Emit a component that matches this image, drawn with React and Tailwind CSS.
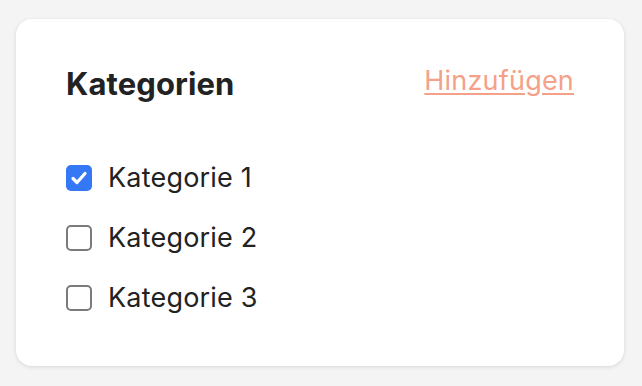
import { useState } from 'react';

const FONT = { fontFamily: 'Inter, "Noto Sans", sans-serif' };

function Check({ checked }) {
  if (checked) {
    return (
      <span className="flex h-[26px] w-[26px] items-center justify-center rounded-[5px] bg-[#3478f6]">
        <svg width="20" height="20" viewBox="0 0 20 20" fill="none">
          <path d="M4 10.5l4 4 8-9" stroke="#fff" strokeWidth="3.2" strokeLinecap="round" strokeLinejoin="round" />
        </svg>
      </span>
    );
  }
  return <span className="block h-[26px] w-[26px] rounded-[5px] border-2 border-[#7b7b7b] bg-white" />;
}

export default function App() {
  const [items, setItems] = useState([
    { name: 'Kategorie 1', checked: true },
    { name: 'Kategorie 2', checked: false },
    { name: 'Kategorie 3', checked: false },
  ]);

  const toggle = (i) =>
    setItems(items.map((it, j) => (j === i ? { ...it, checked: !it.checked } : it)));

  return (
    <div className="min-h-screen bg-[#f4f4f4] pl-4 pt-[19px]" style={FONT}>
      <div className="w-[608px] rounded-2xl bg-white px-[50px] pb-[38px] pt-[46px] shadow-[0_1px_4px_rgba(0,0,0,0.12)]">
        <div className="flex h-[38px] items-start justify-between">
          <h2 className="text-[31px] font-bold leading-[38px] tracking-[0.1px] text-[#222]">Kategorien</h2>
          <a href="#" className="text-[27px] leading-[32px] tracking-[0.2px] text-[#f5a088] underline underline-offset-[3px]">
            Hinzufügen
          </a>
        </div>
        <div className="mt-[45px]">
          {items.map((it, i) => (
            <label key={it.name} className="flex h-[60px] cursor-pointer items-center gap-4" onClick={() => toggle(i)}>
              <Check checked={it.checked} />
              <span className="text-[27px] leading-[30px] tracking-[0.2px] text-[#222]">{it.name}</span>
            </label>
          ))}
        </div>
      </div>
    </div>
  );
}
